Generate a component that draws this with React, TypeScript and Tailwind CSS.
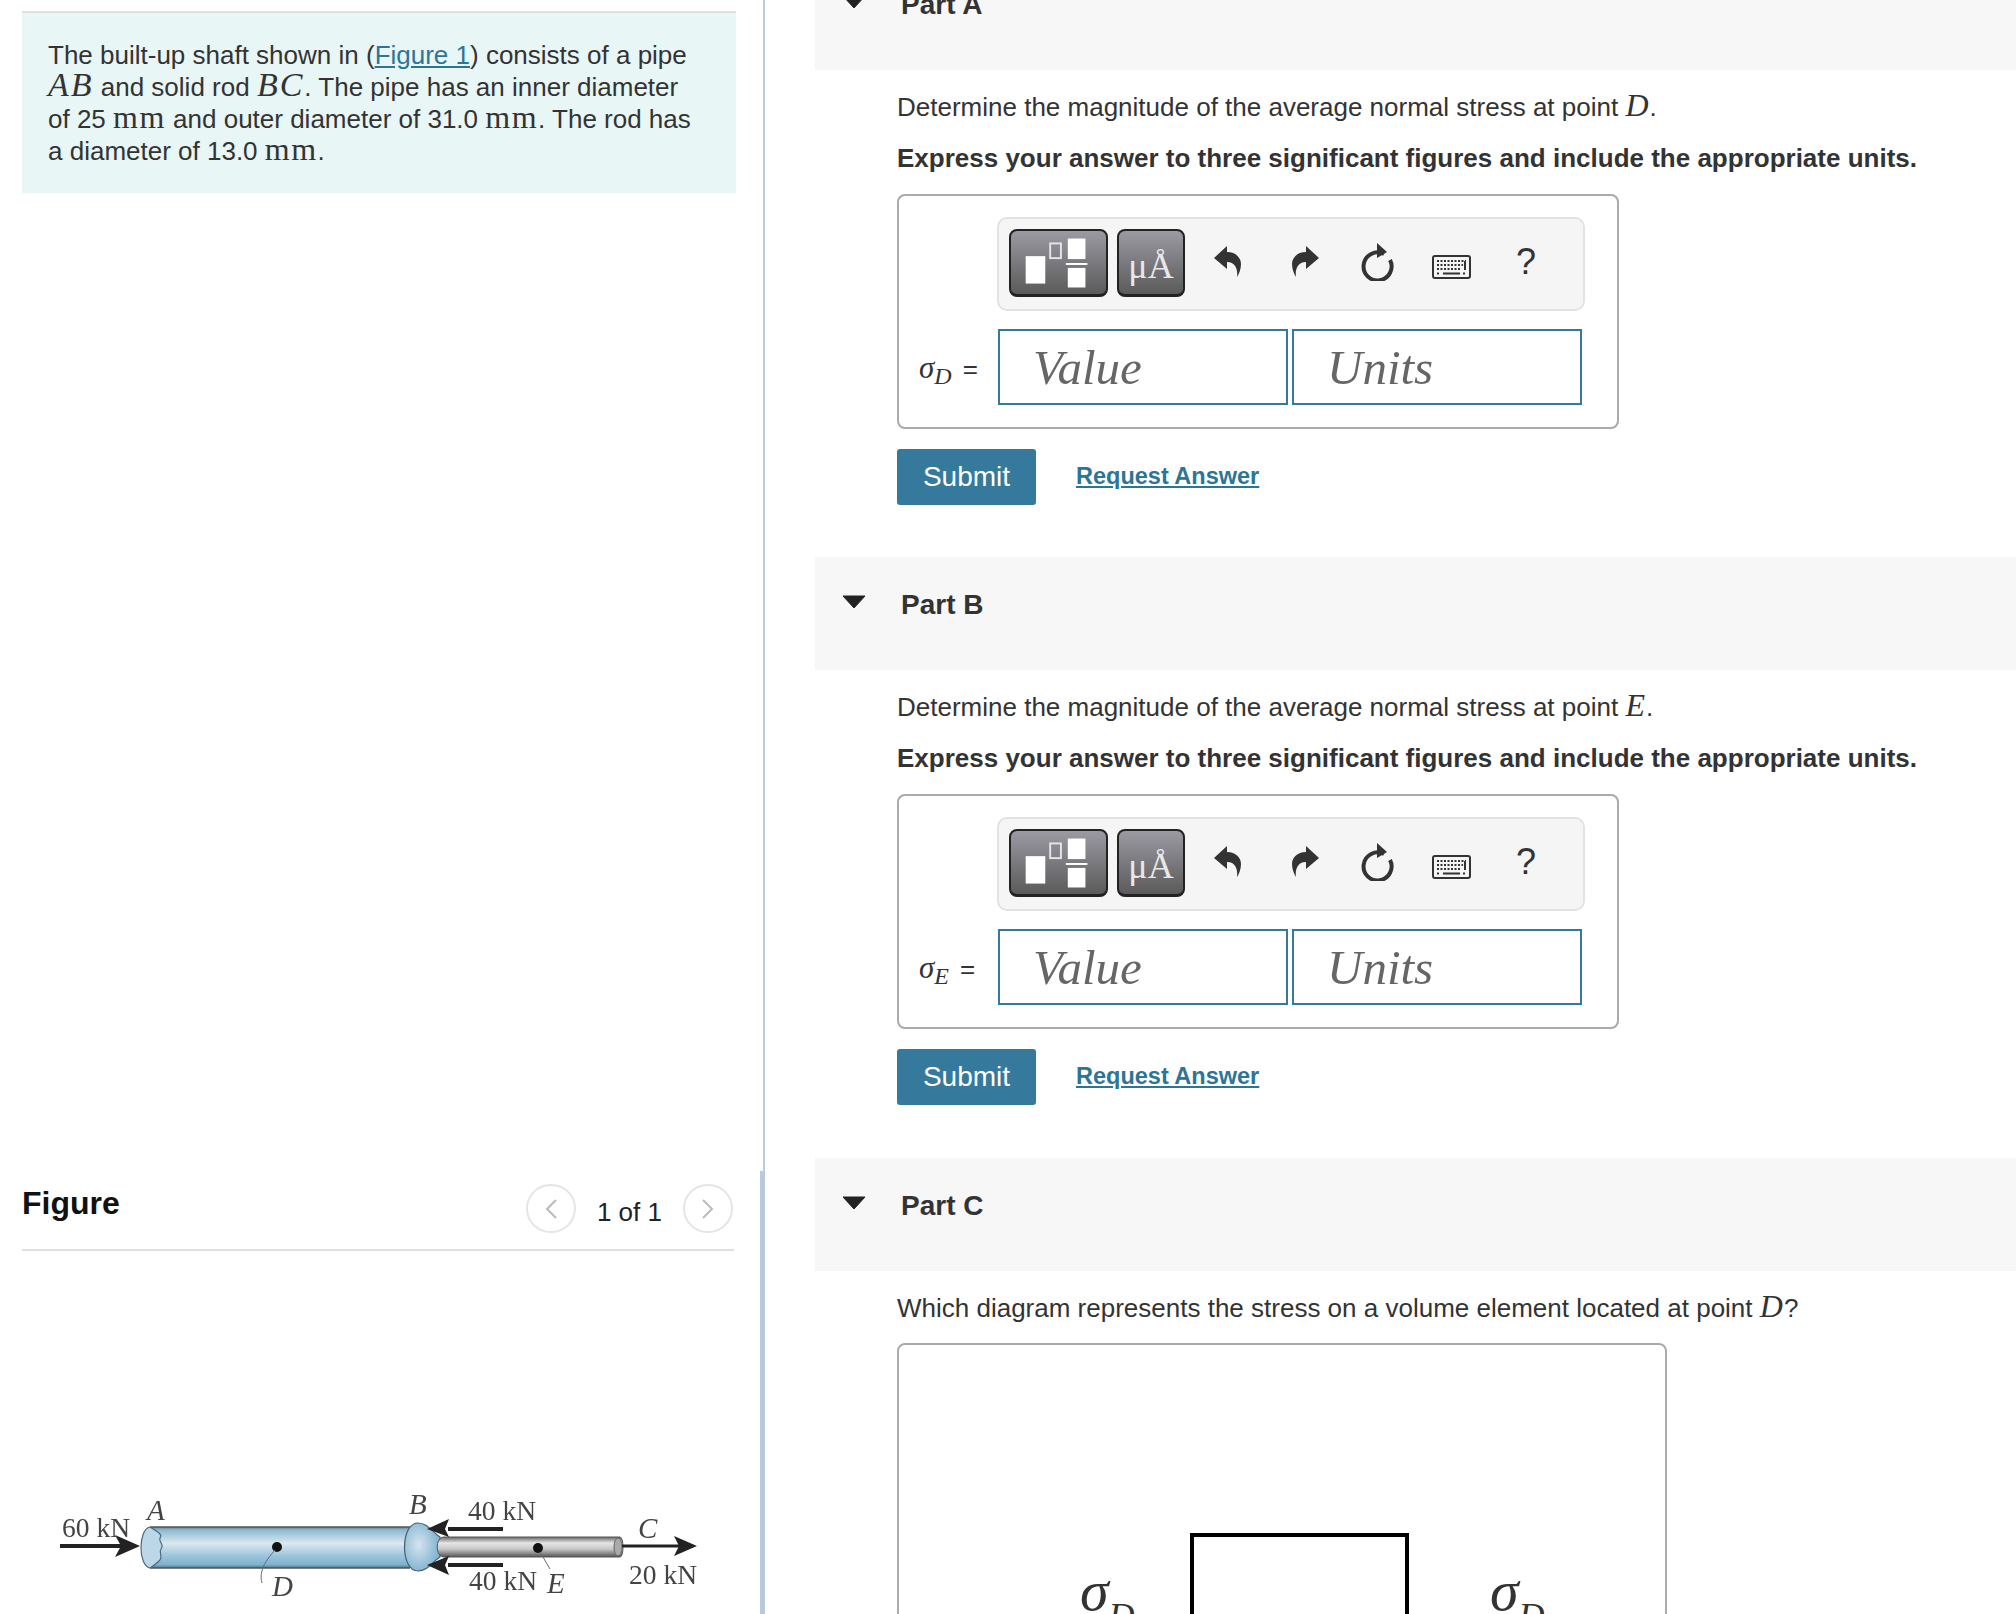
const serif = "font-['Liberation_Serif',serif]";

const MathVar = ({ children }: { children: React.ReactNode }) => (
  <span className="font-['Liberation_Serif',serif] italic text-[32px] leading-[16px] tracking-[1px]">{children}</span>
);

const WideVar = ({ children }: { children: React.ReactNode }) => (
  <span className="font-['Liberation_Serif',serif] italic text-[34px] leading-[16px] tracking-[2px]">{children}</span>
);

const Unit = ({ children }: { children: React.ReactNode }) => (
  <span className="font-['Liberation_Serif',serif] text-[32px] leading-[16px] tracking-[1.500px]">{children}</span>
);

const TemplatesIcon = () => (
  <svg width="97" height="64" viewBox="0 0 97 64">
    <rect x="15" y="25" width="20" height="28" fill="#fff" />
    <rect x="40" y="12" width="11" height="15" fill="none" stroke="#e4e4e4" strokeWidth="2" />
    <rect x="58" y="7" width="18" height="21" fill="#fff" />
    <rect x="56" y="32" width="22" height="2" fill="#fff" />
    <rect x="58" y="37" width="18" height="20" fill="#fff" />
  </svg>
);

const UndoIcon = ({ flip }: { flip?: boolean }) => (
  <svg width="28" height="32" viewBox="0 0 28 32" className={flip ? "-scale-x-100" : ""}>
    <path d="M0 12 L13 0 L13 6 C22 6 27 12 27 18 C27 23 25 28 23 31 C24 24 22 16 13 16 L13 23 Z" fill="#333" />
  </svg>
);

const ResetIcon = () => (
  <svg width="34" height="38" viewBox="0 0 34 38">
    <path d="M24 11 A14 14 0 1 0 30 17" fill="none" stroke="#333" strokeWidth="4" />
    <path d="M17 0 L27 9 L17 15 Z" fill="#333" />
  </svg>
);

const KeyboardIcon = () => (
  <svg width="39" height="24" viewBox="0 0 39 24">
    <rect x="1" y="1" width="37" height="22" rx="2" fill="#f5f5f5" stroke="#333" strokeWidth="2" />
    <path d="M5 6h29M5 10h26M5 14h24" stroke="#333" strokeWidth="2" strokeDasharray="2 1.5" />
    <path d="M33 6v9M11 18.500h17M5 18.500h2M31 18.500h2" stroke="#333" strokeWidth="2" />
  </svg>
);

const Toolbar = () => (
  <div className="ml-[98px] w-[588px] h-[94px] rounded-[10px] border-2 border-[#e2e2e2] bg-[#f5f5f5] flex items-center pl-[10px]">
    <div className="-mt-[2px] w-[99px] h-[68px] rounded-[8px] border-2 border-b-[3px] border-[#222] bg-gradient-to-b from-[#9b9aa3] to-[#5b5b5b] flex items-center justify-center">
      <TemplatesIcon />
    </div>
    <div className="-mt-[2px] ml-[9px] w-[68px] h-[68px] rounded-[8px] border-2 border-b-[3px] border-[#222] bg-gradient-to-b from-[#9b9aa3] to-[#5b5b5b] flex items-end justify-center pb-[10px] font-['Liberation_Serif',serif] text-[#e8e8e8] text-[36px] leading-none">
      μÅ
    </div>
    <div className="ml-[29px] -mt-[4px]"><UndoIcon /></div>
    <div className="ml-[49px] -mt-[4px]"><UndoIcon flip /></div>
    <div className="ml-[41px] -mt-[4px]"><ResetIcon /></div>
    <div className="ml-[38px] mt-[6px]"><KeyboardIcon /></div>
    <div className="ml-[45px] -mt-[4px] font-['Liberation_Sans',sans-serif] text-[36px] leading-none text-[#333]">?</div>
  </div>
);

const AnswerBox = ({ sub }: { sub: string }) => (
  <div className="mt-[20px] w-[722px] h-[235px] rounded-[8px] border-2 border-[#aaa] pt-[21px]">
    <Toolbar />
    <div className="mt-[18px] flex items-center">
      <div className={`w-[99px] pl-[20px] text-[#333] ${serif} italic text-[31px] leading-none whitespace-nowrap`}>
        σ<sub className="text-[24px]">{sub}</sub>
        <span className="font-['Liberation_Sans',sans-serif] not-italic text-[26px] ml-[11px]">=</span>
      </div>
      <input
        placeholder="Value"
        className={`w-[290px] h-[76px] border-2 border-[#35799c] pl-[33px] ${serif} italic text-[49px] placeholder:text-[#666] outline-none`}
      />
      <input
        placeholder="Units"
        className={`ml-[4px] w-[290px] h-[76px] border-2 border-[#35799c] pl-[33px] ${serif} italic text-[49px] placeholder:text-[#666] outline-none`}
      />
    </div>
  </div>
);

const Actions = () => (
  <div className="mt-[20px] flex items-center">
    <button className="w-[139px] h-[56px] rounded-[3px] bg-[#35799c] text-white text-[28px]">Submit</button>
    <a className="ml-[40px] text-[#2d7597] font-bold text-[23.500px] underline">Request Answer</a>
  </div>
);

const PartHeader = ({ title }: { title: string }) => (
  <div className="h-[113px] bg-[#f7f7f7] flex items-start">
    <svg width="24" height="14" viewBox="0 0 24 14" className="ml-[27px] mt-[38px]">
      <path d="M1 1 H23 L12 13 Z" fill="#222" stroke="#222" strokeLinejoin="round" />
    </svg>
    <div className="ml-[35px] mt-[32px] font-bold text-[28px] leading-[32px] text-[#333]">{title}</div>
  </div>
);

const Question = ({ children }: { children: React.ReactNode }) => (
  <p className="pt-[21px] text-[26px] leading-[32px] text-[#333]">{children}</p>
);

const Instructions = () => (
  <p className="mt-[19px] text-[26px] leading-[32px] font-bold text-[#333]">
    Express your answer to three significant figures and include the appropriate units.
  </p>
);

const AnswerPart = ({ title, point, sub }: { title: string; point: string; sub: string }) => (
  <section className="h-[600px]">
    <PartHeader title={title} />
    <div className="pl-[82px]">
      <Question>
        Determine the magnitude of the average normal stress at point <MathVar>{point}</MathVar>.
      </Question>
      <Instructions />
      <AnswerBox sub={sub} />
      <Actions />
    </div>
  </section>
);

const Shaft = () => (
  <svg width="660" height="124" viewBox="50 1490 660 124" className="blur-[0.5px]">
    <defs>
      <linearGradient id="pipe" x1="0" y1="0" x2="0" y2="1">
        <stop offset="0" stopColor="#6d8795" />
        <stop offset="0.08" stopColor="#8fbad2" />
        <stop offset="0.4" stopColor="#dbe8f0" />
        <stop offset="0.7" stopColor="#9cc5db" />
        <stop offset="0.92" stopColor="#7db2cf" />
        <stop offset="1" stopColor="#56707f" />
      </linearGradient>
      <linearGradient id="rod" x1="0" y1="0" x2="0" y2="1">
        <stop offset="0" stopColor="#666" />
        <stop offset="0.3" stopColor="#e6e6e6" />
        <stop offset="0.6" stopColor="#c8c8c8" />
        <stop offset="1" stopColor="#555" />
      </linearGradient>
      <radialGradient id="collar" cx="0.4" cy="0.45" r="0.7">
        <stop offset="0" stopColor="#d5e5ef" />
        <stop offset="1" stopColor="#6fa9c9" />
      </radialGradient>
    </defs>
    {/* pipe */}
    <path d="M150 1527 H410 V1568 H150 C138 1566 138 1529 150 1527 Z" fill="url(#pipe)" />
    <path d="M150 1527 H410 M150 1568 H410" stroke="#555" strokeWidth="1.500" fill="none" />
    <path d="M150 1527 C138 1529 138 1566 150 1568 C153 1566 156 1564 159 1561 C164 1557 158 1553 161 1549 C165 1544 158 1542 160 1538 C163 1534 157 1532 150 1527 Z" fill="#bcd8e8" stroke="#4e6a7a" strokeWidth="1.200" />
    {/* collar */}
    <path d="M418 1523 C428 1523 432 1532 440 1537 V1557 C432 1562 428 1571 418 1571 C400 1571 400 1523 418 1523 Z" fill="url(#collar)" stroke="#46606f" strokeWidth="1.200" />
    {/* rod */}
    <path d="M444 1537 H620 C624 1537 624 1557 620 1557 H444 C435 1557 435 1537 444 1537 Z" fill="url(#rod)" stroke="#555" strokeWidth="1" />
    <ellipse cx="618" cy="1547" rx="4" ry="9" fill="#aaa" stroke="#666" />
    {/* forces */}
    <path d="M60 1546 H122" stroke="#222" strokeWidth="4" />
    <path d="M140 1546 L115 1535 L121 1546 L115 1557 Z" fill="#222" />
    <path d="M448 1529 H503 M448 1565 H503" stroke="#222" strokeWidth="4" />
    <path d="M427 1529 L449 1519 L445 1529 L449 1537 Z M427 1565 L449 1556 L445 1565 L449 1575 Z" fill="#222" />
    <path d="M622 1546 H680" stroke="#222" strokeWidth="3" />
    <path d="M697 1546 L674 1536 L679 1546 L674 1556 Z" fill="#222" />
    {/* points */}
    <circle cx="277" cy="1547" r="5" fill="#111" />
    <circle cx="538" cy="1548" r="5" fill="#111" />
    <path d="M275 1550 C268 1558 258 1570 262 1583" stroke="#667" strokeWidth="1" fill="none" />
    <path d="M540 1552 L550 1569" stroke="#667" strokeWidth="1" fill="none" />
    <g fontFamily="Liberation Serif" fill="#444" fontSize="27.500">
      <text x="62" y="1537">60 kN</text>
      <text x="468" y="1520">40 kN</text>
      <text x="469" y="1590">40 kN</text>
      <text x="629" y="1584">20 kN</text>
      <g fontStyle="italic" fontSize="29">
        <text x="147" y="1520">A</text>
        <text x="409" y="1514">B</text>
        <text x="638" y="1538">C</text>
        <text x="272" y="1596">D</text>
        <text x="547" y="1593">E</text>
      </g>
    </g>
  </svg>
);

const Chevron = ({ left }: { left?: boolean }) => (
  <div className="w-[50px] h-[49px] rounded-full border-2 border-[#e5e5e5] flex items-center justify-center">
    <svg width="14" height="22" viewBox="0 0 14 22">
      <path d={left ? "M12 2 L3 11 L12 20" : "M2 2 L11 11 L2 20"} fill="none" stroke="#bbb" strokeWidth="2" />
    </svg>
  </div>
);

export default function App() {
  return (
    <div className="w-[2016px] h-[1614px] overflow-hidden flex bg-white text-[#333] font-['Liberation_Sans',sans-serif]">
      <aside className="w-[760px] pt-[11px] pl-[22px] flex flex-col">
        <div className="w-[714px] h-[182px] border-t-2 border-[#e0e0e0] bg-[#e8f6f6] pt-[26px] pl-[26px] pr-[34px] text-[26px] leading-[32px] text-[#333]">
          <p>
            The built-up shaft shown in (<a className="text-[#2d7597] underline">Figure 1</a>) consists of a pipe{" "}
            <WideVar>AB</WideVar> and solid rod <WideVar>BC</WideVar>. The pipe has an inner diameter of 25{" "}
            <Unit>mm</Unit> and outer diameter of 31.0 <Unit>mm</Unit>. The rod has a diameter of 13.0 <Unit>mm</Unit>.
          </p>
        </div>
        <div className="mt-[991px] w-[712px] h-[67px] border-b-2 border-[#e0e0e0] flex items-start">
          <h2 className="text-[32px] leading-[38px] font-bold text-[#111]">Figure</h2>
          <div className="ml-auto mr-[1px] flex items-start">
            <Chevron left />
            <span className="mx-[21px] mt-[12px] text-[26px] leading-[32px] text-[#222]">1 of 1</span>
            <Chevron />
          </div>
        </div>
        <div className="mt-[239px] ml-[28px]">
          <Shaft />
        </div>
      </aside>

      <div className="w-[5px] h-full flex flex-col items-end">
        <div className="w-[2px] h-[1171px] bg-[#b9cadf]" />
        <div className="w-[5px] flex-1 bg-[#b9cadf]" />
      </div>

      <main className="flex-1 ml-[50px] -mt-[43px]">
        <AnswerPart title="Part A" point="D" sub="D" />
        <AnswerPart title="Part B" point="E" sub="E" />
        <section className="mt-[1px]">
          <PartHeader title="Part C" />
          <div className="pl-[82px]">
            <Question>
              Which diagram represents the stress on a volume element located at point <MathVar>D</MathVar>?
            </Question>
            <div className="mt-[19px] w-[770px] h-[400px] rounded-[8px] border-2 border-[#aaa] pt-[188px] pl-[181px] flex">
              <div className={`w-[110px] mt-[29px] ${serif} italic text-[58px] leading-none text-[#333] whitespace-nowrap`}>
                σ<sub className="text-[36px] -bottom-[18px]">D</sub>
              </div>
              <div className="w-[219px] h-[200px] border-4 border-black" />
              <div className={`mt-[29px] ml-[81px] ${serif} italic text-[58px] leading-none text-[#333] whitespace-nowrap`}>
                σ<sub className="text-[36px] -bottom-[18px]">D</sub>
              </div>
            </div>
          </div>
        </section>
      </main>
    </div>
  );
}
